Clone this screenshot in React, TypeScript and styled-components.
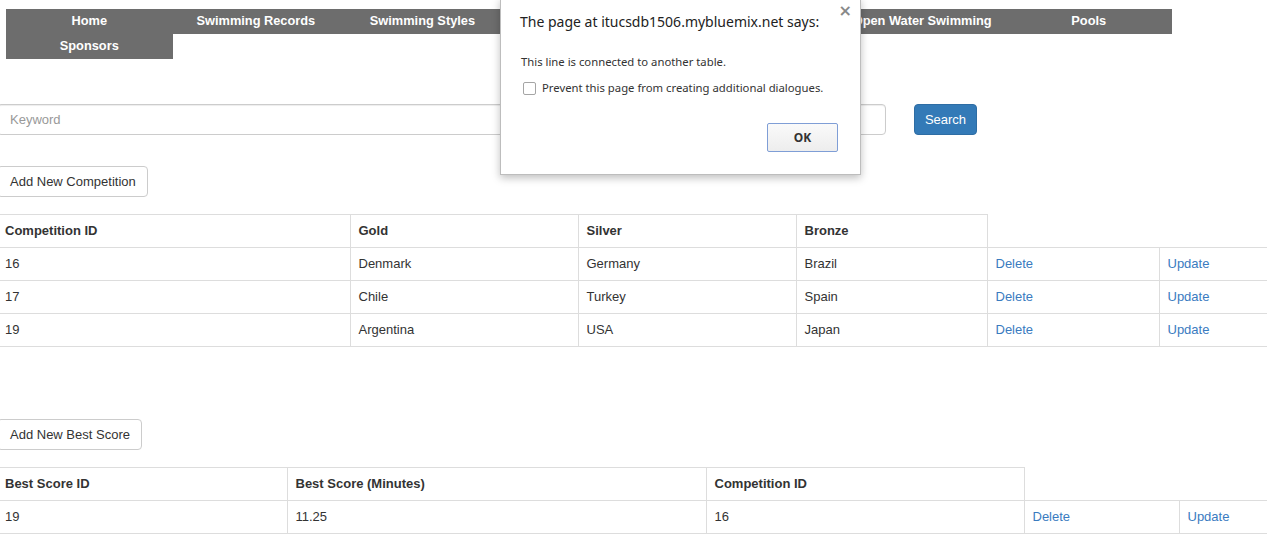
import styled, { createGlobalStyle } from "styled-components";

const GlobalStyle = createGlobalStyle`
  body {
    margin: 0;
    font-family: "Liberation Sans", Arial, sans-serif;
    font-size: 13px;
    color: #333;
    background: #fff;
    overflow: hidden;
  }
`;

const menuItems = [
  "Home",
  "Swimming Records",
  "Swimming Styles",
  "Competitions",
  "Best Scores",
  "Open Water Swimming",
  "Pools",
  "Sponsors",
];

const competitions = [
  { id: "16", gold: "Denmark", silver: "Germany", bronze: "Brazil" },
  { id: "17", gold: "Chile", silver: "Turkey", bronze: "Spain" },
  { id: "19", gold: "Argentina", silver: "USA", bronze: "Japan" },
];

const bestScores = [{ id: "19", score: "11.25", competition: "16" }];

function App() {
  return (
    <Page>
      <GlobalStyle />
      <Menu>
        {menuItems.map((item) => (
          <MenuItem key={item}>{item}</MenuItem>
        ))}
      </Menu>

      <Content>
        <SearchRow>
          <SearchInput placeholder="Keyword" />
          <PrimaryButton>Search</PrimaryButton>
        </SearchRow>

        <Section>
          <DefaultButton>Add New Competition</DefaultButton>
          <Table>
            <colgroup>
              <col style={{ width: 353 }} />
              <col style={{ width: 228 }} />
              <col style={{ width: 218 }} />
              <col style={{ width: 191 }} />
              <col style={{ width: 172 }} />
              <col />
            </colgroup>
            <thead>
              <tr>
                <th>Competition ID</th>
                <th>Gold</th>
                <th>Silver</th>
                <th>Bronze</th>
              </tr>
            </thead>
            <tbody>
              {competitions.map((c) => (
                <tr key={c.id}>
                  <td>{c.id}</td>
                  <td>{c.gold}</td>
                  <td>{c.silver}</td>
                  <td>{c.bronze}</td>
                  <td>
                    <Link href="#">Delete</Link>
                  </td>
                  <td>
                    <Link href="#">Update</Link>
                  </td>
                </tr>
              ))}
            </tbody>
          </Table>
        </Section>

        <Section $gap={72}>
          <DefaultButton>Add New Best Score</DefaultButton>
          <Table>
            <colgroup>
              <col style={{ width: 290 }} />
              <col style={{ width: 419 }} />
              <col style={{ width: 318 }} />
              <col style={{ width: 155 }} />
              <col />
            </colgroup>
            <thead>
              <tr>
                <th>Best Score ID</th>
                <th>Best Score (Minutes)</th>
                <th>Competition ID</th>
              </tr>
            </thead>
            <tbody>
              {bestScores.map((s) => (
                <tr key={s.id}>
                  <td>{s.id}</td>
                  <td>{s.score}</td>
                  <td>{s.competition}</td>
                  <td>
                    <Link href="#">Delete</Link>
                  </td>
                  <td>
                    <Link href="#">Update</Link>
                  </td>
                </tr>
              ))}
            </tbody>
          </Table>
        </Section>
      </Content>

      <Dialog>
        <CloseMark>×</CloseMark>
        <DialogTitle>The page at itucsdb1506.mybluemix.net says:</DialogTitle>
        <DialogMessage>This line is connected to another table.</DialogMessage>
        <CheckRow>
          <CheckBox />
          <span>Prevent this page from creating additional dialogues.</span>
        </CheckRow>
        <DialogActions>
          <OkButton>OK</OkButton>
        </DialogActions>
      </Dialog>
    </Page>
  );
}

export default App;

const Page = styled.div`
  position: relative;
  width: 1267px;
  height: 549px;
  overflow: hidden;
`;

const Menu = styled.nav`
  display: grid;
  grid-template-columns: repeat(7, 1fr);
  width: 1166px;
  margin: 9px 0 0 6px;
`;

const MenuItem = styled.div`
  height: 25px;
  line-height: 24px;
  background: #6d6d6d;
  color: #fff;
  font-weight: bold;
  font-size: 12.8px;
  text-align: center;
  white-space: nowrap;
`;

const Content = styled.div`
  margin-left: -3px;
  width: 1270px;
`;

const SearchRow = styled.div`
  display: flex;
  align-items: center;
  gap: 28px;
  margin-top: 45px;
`;

const SearchInput = styled.input`
  box-sizing: border-box;
  width: 889px;
  height: 31px;
  padding: 6px 12px;
  border: 1px solid #ccc;
  border-radius: 4px;
  font-family: inherit;
  font-size: 13px;
  color: #555;
  box-shadow: inset 0 1px 1px rgba(0, 0, 0, 0.075);

  &::placeholder {
    color: #999;
  }
`;

const PrimaryButton = styled.button`
  box-sizing: border-box;
  height: 31px;
  width: 63px;
  padding: 0;
  background: #337ab7;
  border: 1px solid #2e6da4;
  border-radius: 4px;
  color: #fff;
  font-family: inherit;
  font-size: 13px;
`;

const Section = styled.section<{ $gap?: number }>`
  display: flex;
  flex-direction: column;
  align-items: flex-start;
  gap: 17px;
  margin-top: ${(p) => p.$gap ?? 31}px;
`;

const DefaultButton = styled.button`
  box-sizing: border-box;
  height: 31px;
  padding: 0 11px 0 12px;
  background: #fff;
  border: 1px solid #ccc;
  border-radius: 4px;
  color: #333;
  font-family: inherit;
  font-size: 13px;
`;

const Table = styled.table`
  width: 1271px;
  border-collapse: collapse;
  table-layout: fixed;

  th,
  td {
    box-sizing: border-box;
    height: 33px;
    padding: 0 8px;
    border: 1px solid #ddd;
    text-align: left;
    font-size: 13px;
    line-height: 20px;
    white-space: nowrap;
  }

  th {
    font-weight: bold;
  }

  th:first-child,
  td:first-child {
    border-left: none;
  }
`;

const Link = styled.a`
  color: #3a7bbf;
  text-decoration: none;
`;

const Dialog = styled.div`
  position: absolute;
  top: -2px;
  left: 500px;
  box-sizing: border-box;
  width: 361px;
  padding: 13px 22px 22px 19px;
  background: #fff;
  border: 1px solid #bdbdbd;
  box-shadow: 0 3px 8px rgba(0, 0, 0, 0.25);
  font-family: "Noto Sans", "Open Sans", sans-serif;
  color: #333;
`;

const CloseMark = styled.span`
  position: absolute;
  top: 2px;
  right: 8px;
  font-size: 16px;
  font-weight: bold;
  color: #888;
  font-family: "DejaVu Sans", sans-serif;
`;

const DialogTitle = styled.div`
  font-size: 14px;
  line-height: 20px;
  color: #222;
  white-space: nowrap;
`;

const DialogMessage = styled.div`
  margin-top: 22px;
  font-size: 11.3px;
  line-height: 16px;
  padding-left: 1px;
`;

const CheckRow = styled.div`
  display: flex;
  align-items: center;
  gap: 6px;
  margin-top: 10px;
  padding-left: 3px;
  font-size: 11.3px;
  line-height: 16px;
`;

const CheckBox = styled.span`
  box-sizing: border-box;
  width: 13px;
  height: 13px;
  border: 1px solid #a5a5a5;
  border-radius: 2px;
  background: #fff;
`;

const DialogActions = styled.div`
  display: flex;
  justify-content: flex-end;
  margin-top: 27px;
`;

const OkButton = styled.button`
  box-sizing: border-box;
  width: 71px;
  height: 29px;
  background: linear-gradient(#fafafa, #ededed);
  border: 1px solid #7f9ed6;
  border-radius: 2px;
  font-family: "Noto Sans", "Open Sans", sans-serif;
  font-size: 12px;
  font-weight: bold;
  color: #333;
`;
